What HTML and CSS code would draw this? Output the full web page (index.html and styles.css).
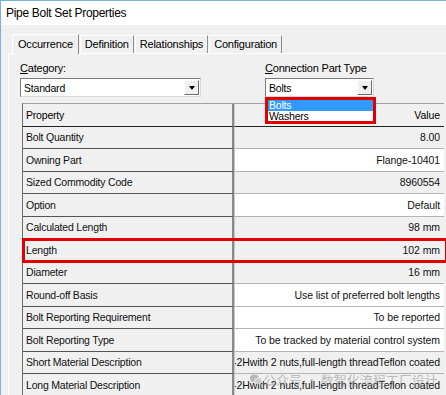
FILE: index.html
```html
<!DOCTYPE html>
<html lang="en">
  <head>
    <meta charset="UTF-8" />
    <meta name="viewport" content="width=device-width, initial-scale=1.0" />
    <title>Pipe Bolt Set Properties</title>

    <!-- CSS -->
    <link rel="stylesheet" href="styles.css">
  </head>
  <body>
    <div class="window">
      <div class="titlebar">Pipe Bolt Set Properties</div>

      <div class="content">
        <div class="tabs">
          <div class="tab active">Occurrence</div>
          <div class="tab">Definition</div>
          <div class="tab">Relationships</div>
          <div class="tab">Configuration</div>
        </div>

        <div class="panel">
          <div class="fields">
            <div class="field category">
              <label><u>C</u>ategory:</label>
              <div class="select">
                <span class="select-text">Standard</span>
                <span class="select-btn"><i></i></span>
              </div>
            </div>

            <div class="field part-type">
              <label><u>C</u>onnection Part Type</label>
              <div class="select">
                <span class="select-text">Bolts</span>
                <span class="select-btn"><i></i></span>
              </div>
              <!-- open dropdown, marked in red -->
              <ul class="dropdown">
                <li class="selected">Bolts</li>
                <li>Washers</li>
              </ul>
            </div>
          </div>

          <div class="grid">
            <div class="row head">
              <div class="name">Property</div>
              <div class="value">Value</div>
            </div>
            <div class="row">
              <div class="name">Bolt Quantity</div>
              <div class="value">8.00</div>
            </div>
            <div class="row">
              <div class="name">Owning Part</div>
              <div class="value white">Flange-10401</div>
            </div>
            <div class="row">
              <div class="name">Sized Commodity Code</div>
              <div class="value">8960554</div>
            </div>
            <div class="row">
              <div class="name">Option</div>
              <div class="value white">Default</div>
            </div>
            <div class="row">
              <div class="name">Calculated Length</div>
              <div class="value">98 mm</div>
            </div>
            <div class="row marked">
              <div class="name">Length</div>
              <div class="value">102 mm</div>
            </div>
            <div class="row">
              <div class="name">Diameter</div>
              <div class="value">16 mm</div>
            </div>
            <div class="row">
              <div class="name">Round-off Basis</div>
              <div class="value white">Use list of preferred bolt lengths</div>
            </div>
            <div class="row">
              <div class="name">Bolt Reporting Requirement</div>
              <div class="value white">To be reported</div>
            </div>
            <div class="row">
              <div class="name">Bolt Reporting Type</div>
              <div class="value white">To be tracked by material control system</div>
            </div>
            <div class="row">
              <div class="name">Short Material Description</div>
              <div class="value"><span>ASTM A193 B7/A194-2Hwith 2 nuts,full-length threadTeflon coated</span></div>
            </div>
            <div class="row">
              <div class="name">Long Material Description</div>
              <div class="value"><span>ASTM A193 B7/A194-2Hwith 2 nuts,full-length threadTeflon coated</span></div>
            </div>
          </div>
        </div>
      </div>

      <!-- watermark -->
      <div class="watermark">
        <svg width="12" height="11" viewBox="0 0 22 20">
          <ellipse cx="8" cy="7.5" rx="8" ry="6.5" fill="#b8b8b8" />
          <path d="M3 12 L2 16 L7 13 Z" fill="#b8b8b8" />
          <ellipse cx="15" cy="12.5" rx="7" ry="5.5" fill="#cfcfcf" stroke="#f0f0f0" stroke-width="1" />
          <path d="M19 16 L20 19 L16 17 Z" fill="#cfcfcf" />
        </svg>
        <span>公众号 · 数智化流程工厂设计</span>
      </div>
    </div>
  </body>
</html>
```

FILE: styles.css
```css
* {
  box-sizing: border-box;
}

body {
  margin: 0;
  font-family: "Liberation Sans", Arial, sans-serif;
  font-size: 10.5px;
  letter-spacing: -0.2px;
  color: #000;
}

.window {
  position: relative;
  width: 446px;
  height: 395px;
  overflow: hidden;
  background-color: #f0f0f0;
  border-top: 1px solid #78aee0;
  border-left: 1px solid #78aee0;
}

.titlebar {
  height: 24px;
  background-color: #fff;
  padding-left: 5px;
  display: flex;
  align-items: center;
  font-size: 12px;
  letter-spacing: -0.3px;
}

.content {
  padding: 8px 0 0 7px;
}

/* tabs */
.tabs {
  display: flex;
  align-items: flex-end;
  height: 20px;
  padding-left: 4px;
}

.tab {
  height: 18px;
  line-height: 17px;
  padding: 0 4px;
  margin-right: 1px;
  border: 1px solid #fff;
  border-right-color: #8c8c8c;
  border-bottom: none;
  font-size: 11px;
}

.tab.active {
  height: 20px;
  margin-bottom: -1px;
  padding: 0 5px;
  position: relative;
  background-color: #f0f0f0;
  line-height: 19px;
}

.panel {
  border-top: 1px solid #fff;
  border-left: 1px solid #fff;
  padding: 8px 0 0 11px;
}

/* category / part type */
.fields {
  display: flex;
  gap: 64px;
}

.field {
  position: relative;
  display: flex;
  flex-direction: column;
}

.field label {
  height: 13px;
  line-height: 13px;
  margin-bottom: 3px;
  font-size: 11px;
}

.category {
  width: 181px;
}

.part-type {
  width: 109px;
}

.select {
  display: flex;
  align-items: center;
  height: 19px;
  background-color: #fff;
  border: 1px solid #7a7a7a;
  border-right-color: #d8d8d8;
  border-bottom-color: #d8d8d8;
  padding-left: 3px;
}

.select-text {
  flex: 1;
}

.select-btn {
  display: flex;
  align-items: center;
  justify-content: center;
  width: 15px;
  height: 15px;
  margin-right: 1px;
  background-color: #f0f0f0;
  border: 1px solid #fff;
  border-right-color: #6d6d6d;
  border-bottom-color: #6d6d6d;
}

.select-btn i {
  width: 0;
  height: 0;
  border-left: 3.5px solid transparent;
  border-right: 3.5px solid transparent;
  border-top: 4px solid #000;
}

.dropdown {
  position: absolute;
  left: 0;
  top: 35px;
  width: 111px;
  margin: 0;
  padding: 0;
  list-style: none;
  background-color: #fff;
  border: 3px solid #e00000;
  z-index: 2;
}

.dropdown li {
  height: 10.5px;
  line-height: 10px;
  padding-left: 1px;
}

.dropdown .selected {
  background-color: #3399ff;
  color: #fff;
}

/* property grid */
.grid {
  margin: 6px 0 0 2px;
  width: 422px;
  border-top: 1px solid #a0a0a0;
  border-left: 1px solid #6d6d6d;
}

.row {
  display: flex;
  height: 22.5px;
}

.row .name,
.row .value {
  display: flex;
  align-items: center;
  white-space: nowrap;
  overflow: hidden;
}

.row .name {
  width: 211px;
  padding-left: 3px;
  background-color: #f0f0f0;
  border-bottom: 1px solid #555;
  border-right: 2px solid #8a8a8a;
  color: #111;
}

.row .value {
  flex: 1;
  justify-content: flex-end;
  padding-right: 4px;
  background-color: #f0f0f0;
  border-bottom: 1px solid #b4b4b4;
  border-left: 1px solid #c8c8c8;
  color: #111;
  letter-spacing: -0.08px;
}

.row .value span {
  flex-shrink: 0;
}

.row .value.white {
  background-color: #fff;
}

.row.head .name,
.row.head .value {
  border-bottom-color: #222;
  color: #000;
}

.row.marked {
  position: relative;
}

.row.marked::after {
  content: "";
  position: absolute;
  left: -1px;
  right: -4px;
  top: -1px;
  bottom: -1px;
  border: 3px solid #e00000;
}

/* watermark */
.watermark {
  position: absolute;
  left: 249px;
  top: 369px;
  display: flex;
  align-items: center;
  gap: 1px;
  font-family: "Noto Sans CJK SC", sans-serif;
  font-size: 13px;
  letter-spacing: 0;
  color: rgba(140, 140, 140, 0.55);
}
```
